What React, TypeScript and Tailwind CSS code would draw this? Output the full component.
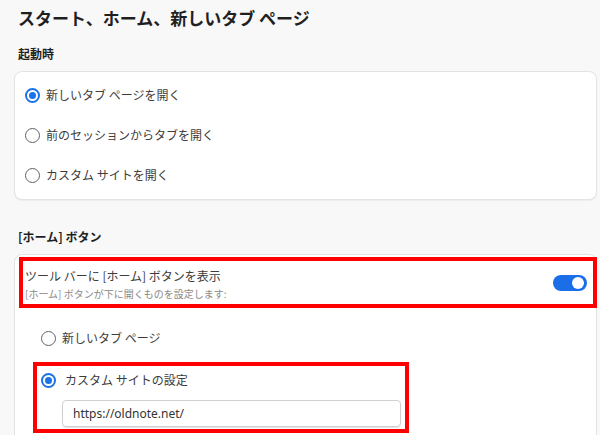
const font = { fontFamily: '"Noto Sans CJK JP", "Noto Sans", sans-serif' };

function Radio({ checked }: { checked?: boolean }) {
  return checked ? (
    <span className="w-[15px] h-[15px] rounded-full border-2 border-[#1a73e8] flex items-center justify-center shrink-0">
      <span className="w-[7px] h-[7px] rounded-full bg-[#1a73e8]" />
    </span>
  ) : (
    <span className="w-[15px] h-[15px] rounded-full border-[1.5px] border-[#5f6368] shrink-0" />
  );
}

function Option({ label, checked }: { label: string; checked?: boolean }) {
  return (
    <div className="h-10 flex items-center gap-[6px] text-[12px] text-[#3c3c3c]">
      <Radio checked={checked} />
      <span>{label}</span>
    </div>
  );
}

export default function App() {
  return (
    <div className="w-[600px] h-[435px] overflow-hidden bg-[#f8f8f8] pl-[14px] pr-[3px] pt-[4px]" style={font}>
      <h1 className="pl-[4px] text-[17px] leading-[28px] font-bold text-[#1f1f1f]">
        スタート、ホーム、新しいタブ ページ
      </h1>

      <h2 className="pl-[4px] mt-[12px] text-[12px] leading-5 font-bold text-[#1f1f1f]">起動時</h2>
      <div className="mt-[7px] h-[129px] bg-white border border-[#e3e3e3] rounded-lg shadow-[0_1px_1px_rgba(0,0,0,0.05)] pl-[10px] pt-[3px]">
        <Option label="新しいタブ ページを開く" checked />
        <Option label="前のセッションからタブを開く" />
        <Option label="カスタム サイトを開く" />
      </div>

      <h2 className="pl-[4px] mt-[27px] text-[12px] leading-5 font-bold text-[#1f1f1f]">[ホーム] ボタン</h2>
      <div className="mt-[7px] h-[200px] bg-white border border-[#e3e3e3] rounded-lg pt-[2px]">
        <div className="ml-[4px] -mr-[1px] h-[51px] border-4 border-[#ff0000] flex items-center justify-between pl-[2px] pr-[6px]">
          <div className="pt-[2px]">
            <div className="text-[12px] leading-5 text-[#3c3c3c]">ツール バーに [ホーム] ボタンを表示</div>
            <div className="text-[10px] leading-[15px] text-[#8a8a8a]">[ホーム] ボタンが下に開くものを設定します:</div>
          </div>
          <span className="w-[34px] h-[16px] rounded-full bg-[#1a6ee8] flex items-center justify-end pr-[3px]">
            <span className="w-[12px] h-[12px] rounded-full bg-white" />
          </span>
        </div>

        <div className="ml-[26px] mt-[10px]">
          <Option label="新しいタブ ページ" />
        </div>

        <div className="ml-[18px] mt-[4px] w-[376px] border-4 border-[#ff0000] pl-[4px] pr-[4px] pt-0 pb-[2px]">
          <div className="h-7 flex items-center gap-[9px] text-[12px] text-[#3c3c3c]">
            <Radio checked />
            <span>カスタム サイトの設定</span>
          </div>
          <div
            className="ml-[21px] mt-[6px] h-[27px] border border-[#d0d0d0] rounded-[4px] shadow-[0_1px_1px_rgba(0,0,0,0.12)] flex items-center pl-[10px] text-[12px] text-[#333]"
            style={{ fontFamily: '"Noto Sans", sans-serif' }}
          >
            https://oldnote.net/
          </div>
        </div>
      </div>
    </div>
  );
}
